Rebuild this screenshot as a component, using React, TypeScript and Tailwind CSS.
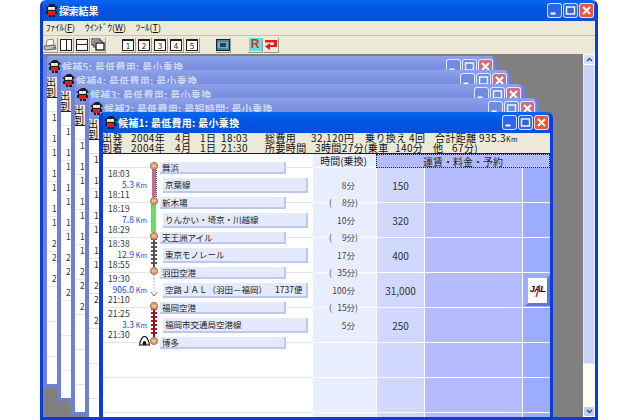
import React from "react";

const Ninja = () => (
  <svg width="15" height="15" viewBox="0 0 15 15" className="shrink-0">
    <path d="M3 4 L5 2 L7 1 L10 1 L12 3 L14 5 L12 6 L12 9 L3 9 L3 6 L1 5 Z" fill="#1c1c1c" />
    <rect x="4" y="4" width="7" height="3" fill="#f2c8a8" />
    <rect x="5" y="4" width="2" height="2" fill="#fff" />
    <rect x="8" y="4" width="2" height="2" fill="#fff" />
    <rect x="4" y="8" width="7" height="4" fill="#d82020" />
    <rect x="2" y="8" width="2" height="3" fill="#1c1c1c" />
    <rect x="11" y="8" width="2" height="3" fill="#1c1c1c" />
    <rect x="5" y="12" width="2" height="2" fill="#1c1c1c" />
    <rect x="8" y="12" width="3" height="2" fill="#1c1c1c" />
  </svg>
);

const CapBtn = ({ kind, active }: { kind: "min" | "max" | "close"; active: boolean }) => {
  const bg =
    kind === "close"
      ? active
        ? "bg-[#e2583a]"
        : "bg-[#c8708c]"
      : active
      ? "bg-[#2f66e6]"
      : "bg-[#6f8ce2]";
  return (
    <div className={`w-[15px] h-[15px] rounded-[3px] border border-white/80 flex items-center justify-center ${bg}`}>
      <svg width="11" height="11" viewBox="0 0 11 11">
        {kind === "min" && <rect x="1.5" y="7.5" width="5" height="2" fill="#fff" />}
        {kind === "max" && <rect x="1.5" y="2" width="8" height="7" fill="none" stroke="#fff" strokeWidth="1.4" />}
        {kind === "close" && <path d="M2 2 L9 9 M9 2 L2 9" stroke="#fff" strokeWidth="2" />}
      </svg>
    </div>
  );
};

const Caps = ({ active }: { active: boolean }) => (
  <div className="ml-auto flex gap-[1px]">
    <CapBtn kind="min" active={active} />
    <CapBtn kind="max" active={active} />
    <CapBtn kind="close" active={active} />
  </div>
);

const Btn = ({ children }: { children: React.ReactNode }) => (
  <div className="w-[15px] h-[15px] flex items-center justify-center bg-[#ece9d8] border-r border-b border-[#a09c8c] shrink-0">
    {children}
  </div>
);

const NumBtn = ({ n }: { n: number }) => (
  <Btn>
    <div className="w-[12px] h-[12px] border border-[#222] border-t-2 bg-white text-[8px] leading-[9px] text-center text-[#222]">{n}</div>
  </Btn>
);

const segments = [
  { st: "舞浜", t1: "18:03", km: "5.3", t2: "18:11", line: "京葉線", extra: "", track: "pink" },
  { st: "新木場", t1: "18:19", km: "7.8", t2: "18:29", line: "りんかい・埼京・川越線", extra: "", track: "green" },
  { st: "天王洲アイル", t1: "18:38", km: "12.9", t2: "18:55", line: "東京モノレール", extra: "", track: "gray" },
  { st: "羽田空港", t1: "19:30", km: "906.0", t2: "21:10", line: "空路ＪＡＬ（羽田－福岡）", extra: "1737便", track: "air" },
  { st: "福岡空港", t1: "21:25", km: "3.3", t2: "21:30", line: "福岡市交通局空港線", extra: "", track: "red" },
  { st: "博多", t1: "", km: "", t2: "", line: "", extra: "", track: "" },
];

const rows = [
  { time: "8分", wait: "8分)", fare: "150", jal: false },
  { time: "10分", wait: "9分)", fare: "320", jal: false },
  { time: "17分", wait: "35分)", fare: "400", jal: false },
  { time: "100分", wait: "15分)", fare: "31,000", jal: true },
  { time: "5分", wait: "", fare: "250", jal: false },
  { time: "", wait: "", fare: "", jal: false },
  { time: "", wait: "", fare: "", jal: false },
  { time: "", wait: "", fare: "", jal: false },
];

const blankRows = rows.map(() => ({ time: "", wait: "", fare: "", jal: false }));

const Track = ({ kind }: { kind: string }) => {
  const ties = Array.from({ length: 7 }, (_, i) => 6 + i * 4);
  return (
    <svg width="13" height="35" viewBox="0 0 13 35" className="block">
      {kind === "pink" && (
        <>
          <rect x="5" y="4" width="4" height="31" fill="#c4689c" />
          <line x1="9.5" y1="4" x2="9.5" y2="35" stroke="#555" strokeDasharray="1 1" />
        </>
      )}
      {kind === "green" && (
        <>
          <rect x="5" y="4" width="4" height="31" fill="#66e060" />
          <line x1="4.5" y1="4" x2="4.5" y2="35" stroke="#666" strokeWidth="0.6" />
        </>
      )}
      {kind === "gray" && (
        <>
          <rect x="6" y="4" width="2" height="31" fill="#555" />
          {ties.map((y) => (
            <rect key={y} x="4" y={y} width="6" height="2" fill="#555" />
          ))}
        </>
      )}
      {kind === "red" && (
        <>
          <rect x="6" y="4" width="2" height="31" fill="#8c1020" />
          {ties.map((y) => (
            <rect key={y} x="4" y={y} width="6" height="2" fill="#a01828" />
          ))}
        </>
      )}
      {kind === "air" && (
        <>
          <line x1="7" y1="8" x2="7" y2="26" stroke="#bbb" strokeDasharray="2 1" />
          <path d="M4 25 L7 29 L10 25" fill="none" stroke="#777" />
        </>
      )}
      <circle cx="7" cy="4" r="3.6" fill="#ee9a68" stroke="#7a6a5a" strokeWidth="0.8" />
      <rect x="5" y="3.4" width="4" height="1" fill="#ffe0c8" />
    </svg>
  );
};

const Onigiri = () => (
  <svg width="11" height="10" viewBox="0 0 11 10" className="block">
    <path d="M5.5 0.5 C8 0.5 9.5 4 10.5 9 L0.5 9 C1.5 4 3 0.5 5.5 0.5 Z" fill="#fff" stroke="#111" strokeWidth="1.2" />
    <path d="M3.5 9 C3.5 6.5 4.2 5 5.5 5 C6.8 5 7.5 6.5 7.5 9 Z" fill="#111" />
  </svg>
);

/* A window behind the front one shows only the first digit of each time. */
const BackTimes = () => (
  <div className="absolute left-0 top-0 pt-[8px] w-[10px] text-[#333]">
    {segments.map((s) => (
      <div key={s.st} className="h-[35px] pt-[5px] pl-[5px] text-[8.5px]">
        <div className="h-[12px] leading-[12px]">{s.t1.charAt(0)}</div>
        <div className="h-[11px]" />
        <div className="h-[9px] leading-[9px]">{s.t2.charAt(0)}</div>
      </div>
    ))}
  </div>
);

const Route = () => (
  <div className="absolute left-0 top-0 pt-[8px] w-[210px] text-[#333]">
    {segments.map((s) => (
      <div key={s.st} className="flex h-[35px]">
        <div className="w-[44px] pt-[5px] pl-[5px] text-[8.5px] tracking-[0.1px] relative shrink-0">
          <div className="h-[12px] leading-[12px]">{s.t1}</div>
          <div className="h-[11px] leading-[11px] text-right text-[#2244e0] text-[8.5px] whitespace-nowrap">
            {s.km}
            {s.km !== "" && <span className="text-[7px]"> Km</span>}
          </div>
          <div className="h-[9px] leading-[9px]">{s.t2}</div>
          {s.st === "博多" && (
            <div className="absolute right-[-3px] top-[-1px]">
              <Onigiri />
            </div>
          )}
        </div>
        <div className="w-[13px] shrink-0 relative">
          <Track kind={s.track} />
        </div>
        <div className="flex flex-col gap-[4px] min-w-0">
          <div className="w-[126px] h-[12px] bg-[#e4e9fb] border-r-2 border-b-2 border-[#bcc8ee] pl-[2px] text-[8.5px] leading-[11px] text-[#222] whitespace-nowrap">
            {s.st}
          </div>
          {s.line !== "" && (
            <div className="ml-[3px] w-[145px] h-[15px] bg-[#e4e9fb] border-r-2 border-b-2 border-[#bcc8ee] pl-[2px] text-[8.5px] leading-[13px] text-[#222] whitespace-nowrap flex">
              <span>{s.line}</span>
              {s.extra !== "" && <span className="ml-[8px]">{s.extra}</span>}
            </div>
          )}
        </div>
      </div>
    ))}
  </div>
);

const Row = ({ time, wait, fare, jal }: (typeof rows)[number]) => (
  <div className="flex h-[35px] shrink-0">
    <div className="w-[210px] border-b border-[#e4e4e4] bg-white" />
    <div className="w-[63px] bg-[#e8eeff] border-b border-white relative text-[8.5px] text-[#444]">
      <div className="absolute right-[21px] top-0 h-[34px] flex items-center whitespace-nowrap">{time}</div>
      {wait !== "" && (
        <div className="absolute left-[16px] bottom-[-6px] w-[29px] h-[12px] leading-[12px] bg-[#e8eeff] flex justify-between z-10">
          <span>(</span>
          <span>{wait}</span>
        </div>
      )}
    </div>
    <div className="w-[48px] bg-[#d0d8ff] border-b border-white border-l border-l-white flex items-center justify-center text-[10px] text-[#333]">
      {fare}
    </div>
    <div className="w-[98px] bg-[#b4bcff] border-b border-white border-l border-l-white" />
    <div className="w-[28px] bg-[#9cacff] border-b border-white border-l border-l-white flex items-center justify-end relative">
      {jal && (
        <div className="w-[25px] h-[31px] bg-white border-r-[3px] border-b-[3px] border-[#6078d8] border-t-[3px] border-l-[3px] border-t-[#9cacff] border-l-[#9cacff] flex items-center justify-center relative">
          <span className="font-['Liberation_Sans',sans-serif] font-bold italic text-[9px] text-black tracking-[-0.5px]">JAL</span>
          <svg width="6" height="12" viewBox="0 0 6 12" className="absolute left-[7px] top-[7px]">
            <path d="M5 0 L1 12" stroke="#e02020" strokeWidth="1.4" />
          </svg>
        </div>
      )}
    </div>
  </div>
);

const Cell = ({ w, children }: { w: string; children: React.ReactNode }) => (
  <span className={`${w} shrink-0 whitespace-nowrap`}>{children}</span>
);

const ChildWindow = ({ title, active }: { title: string; active: boolean }) => {
  const border = active ? "border-[#0a3ddc]" : "border-[#6f80d8]";
  return (
    <div className={`isolate w-[454px] h-[331px] flex flex-col overflow-hidden rounded-t-[6px] border-l-4 border-r-[3px] border-b-[3px] ${border}`}>
      <div
        className={`h-[21px] shrink-0 -ml-[4px] -mr-[3px] px-[4px] flex items-center ${
          active
            ? "bg-gradient-to-b from-[#0a66ee] via-[#0054e3] to-[#0650d8] text-white"
            : "bg-gradient-to-b from-[#8ea2ea] via-[#7a90e0] to-[#7c92de] text-[#ccd8f6]"
        }`}
      >
        <Ninja />
        <span className="text-[10px] font-bold whitespace-nowrap tracking-[0.3px]">{title}</span>
        <Caps active={active} />
      </div>
      <div className="h-[21px] shrink-0 bg-[#ece9d8] border-b border-[#222] text-[10px] leading-[10px] text-[#111] tracking-[0.4px] -ml-[1px]">
        {active ? (
          <>
            <div className="flex h-[10px]">
              <Cell w="w-[29px]">出発</Cell>
              <Cell w="w-[44px]">2004年</Cell>
              <Cell w="w-[25px]">4月</Cell>
              <Cell w="w-[21px]">1日</Cell>
              <Cell w="w-[44px]">18:03</Cell>
              <Cell w="w-[46px]">総費用</Cell>
              <Cell w="w-[54px]">32,120円</Cell>
              <Cell w="w-[44px]">乗り換え</Cell>
              <Cell w="w-[26px]">4回</Cell>
              <Cell w="w-[44px]">合計距離</Cell>
              <Cell w="w-[40px]">
                935.3<span className="text-[7px]">Km</span>
              </Cell>
            </div>
            <div className="flex h-[10px]">
              <Cell w="w-[29px]">到着</Cell>
              <Cell w="w-[44px]">2004年</Cell>
              <Cell w="w-[25px]">4月</Cell>
              <Cell w="w-[21px]">1日</Cell>
              <Cell w="w-[44px]">21:30</Cell>
              <Cell w="w-[50px]">所要時間</Cell>
              <Cell w="w-[80px]">3時間27分(乗車</Cell>
              <Cell w="w-[38px]">140分</Cell>
              <Cell w="w-[19px]">他</Cell>
              <Cell w="w-[30px]">67分)</Cell>
            </div>
          </>
        ) : (
          <>
            <div className="h-[10px]">出</div>
            <div className="h-[10px]">到</div>
          </>
        )}
      </div>
      <div className="relative flex-1 min-h-0 overflow-hidden">
        <div className="flex h-[14px] text-[10px] leading-[13px] text-[#222]">
          <div className="w-[210px] bg-white border-b border-[#e4e4e4]" />
          <div className="w-[63px] bg-[#e8eeff] border-b border-white text-right pr-[9px] whitespace-nowrap">{active ? "時間(乗換)" : ""}</div>
          <div className="w-[174px] bg-[#b4bcff] border border-dotted border-[#222] text-center">{active ? "運賃・料金・予約" : ""}</div>
        </div>
        {(active ? rows : blankRows).map((r, i) => (
          <Row key={i} {...r} />
        ))}
        {active ? <Route /> : <BackTimes />}
      </div>
    </div>
  );
};

const windows = [
  { title: "候補5: 最低費用: 最小乗換", cls: "left-[0px] top-[2px]" },
  { title: "候補4: 最低費用: 最小乗換", cls: "left-[14px] top-[16px]" },
  { title: "候補3: 最低費用: 最小乗換", cls: "left-[28px] top-[30px]" },
  { title: "候補2: 最低費用: 最短時間: 最小乗換", cls: "left-[42px] top-[44px]" },
  { title: "候補1: 最低費用: 最小乗換", cls: "left-[56px] top-[58px]" },
];

export default function App() {
  return (
    <div className="w-[638px] h-[420px] bg-white overflow-hidden font-['Noto_Sans_CJK_JP',sans-serif]">
      <div className="ml-[40px] w-[558px] h-[420px] rounded-t-[6px] flex flex-col border-l-[3px] border-r-[3px] border-b-[3px] border-[#0a3ddc] overflow-hidden">
        <div className="h-[21px] shrink-0 -mx-[3px] px-[4px] flex items-center bg-gradient-to-b from-[#0a66ee] via-[#0054e3] to-[#0650d8] text-white">
          <Ninja />
          <span className="text-[10px] font-bold tracking-[-0.2px]">探索結果</span>
          <Caps active />
        </div>
        <div className="h-[15px] shrink-0 bg-[#ece9d8] border-b border-[#c8c4b0] flex items-center text-[9px] text-[#111] pl-[3px] gap-[10px]">
          <span>ﾌｧｲﾙ(<u>F</u>)</span>
          <span>ｳｲﾝﾄﾞｳ(<u>W</u>)</span>
          <span>ﾂｰﾙ(<u>T</u>)</span>
        </div>
        <div className="h-[18px] shrink-0 bg-[#ece9d8] flex items-center gap-[1px]">
          <Btn>
            <svg width="14" height="13" viewBox="0 0 14 13">
              <path d="M4 2 L10 1 L11 7 L3 8 Z" fill="#fff" stroke="#888" />
              <path d="M1 8 L12 7 L13 11 L2 12 Z" fill="#bbb" stroke="#666" />
              <rect x="10" y="9" width="2" height="1.5" fill="#2a2" />
            </svg>
          </Btn>
          <Btn>
            <div className="w-[12px] h-[12px] border border-[#222] bg-white flex justify-center">
              <div className="w-[1px] bg-[#222]" />
            </div>
          </Btn>
          <Btn>
            <div className="w-[12px] h-[12px] border border-[#222] bg-white flex items-center">
              <div className="h-[1px] w-full bg-[#222]" />
            </div>
          </Btn>
          <Btn>
            <svg width="14" height="13" viewBox="0 0 14 13">
              <rect x="1" y="1" width="8" height="6" fill="#fff" stroke="#222" />
              <rect x="3" y="3" width="8" height="6" fill="#fff" stroke="#222" />
              <rect x="5" y="5" width="8" height="7" fill="#fff" stroke="#222" strokeWidth="1.4" />
            </svg>
          </Btn>
          <div className="w-[13px] shrink-0" />
          <NumBtn n={1} />
          <NumBtn n={2} />
          <NumBtn n={3} />
          <NumBtn n={4} />
          <NumBtn n={5} />
          <div className="w-[14px] shrink-0" />
          <Btn>
            <svg width="14" height="12" viewBox="0 0 14 12">
              <rect x="0.5" y="0.5" width="13" height="11" fill="#3a8a9c" stroke="#123" />
              <rect x="2" y="3" width="10" height="6" fill="#7ac" />
              <rect x="4" y="4" width="6" height="4" fill="#245" />
            </svg>
          </Btn>
          <div className="w-[15px] shrink-0" />
          <Btn>
            <div className="w-[13px] h-[13px] bg-[#60e0e0] text-[#e02828] text-[12px] leading-[13px] font-bold text-center font-['Liberation_Sans',sans-serif]">R</div>
          </Btn>
          <Btn>
            <svg width="14" height="12" viewBox="0 0 14 12">
              <path d="M1 1 H13 V8 H6 V11 L1 7.5 L6 4 V6 H10 V3.5 H1 Z" fill="#e02020" />
            </svg>
          </Btn>
        </div>
        <div className="flex-1 min-h-0 bg-[#808080] flex">
          <div className="relative flex-1 overflow-hidden">
            {windows.map((w, i) => (
              <div key={w.title} className={`absolute ${w.cls}`}>
                <ChildWindow title={w.title} active={i === 4} />
              </div>
            ))}
          </div>
          <div className="w-[12px] shrink-0 flex flex-col bg-[#fdfdf0]">
            <div className="h-[11px] shrink-0 bg-[#d4def8] border border-white rounded-[2px] flex items-center justify-center">
              <svg width="7" height="5" viewBox="0 0 7 5"><path d="M1 4 L3.5 1.5 L6 4" fill="none" stroke="#3a4a80" strokeWidth="1.4" /></svg>
            </div>
            <div className="h-[299px] shrink-0 bg-[#c8d4f8] border-x border-b border-[#dfe6fb]" />
            <div className="flex-1" />
            <div className="h-[11px] shrink-0 bg-[#c0ccf4] border border-white rounded-[2px] flex items-center justify-center">
              <svg width="7" height="5" viewBox="0 0 7 5"><path d="M1 1 L3.5 3.5 L6 1" fill="none" stroke="#3a4a80" strokeWidth="1.4" /></svg>
            </div>
          </div>
        </div>
      </div>
    </div>
  );
}
